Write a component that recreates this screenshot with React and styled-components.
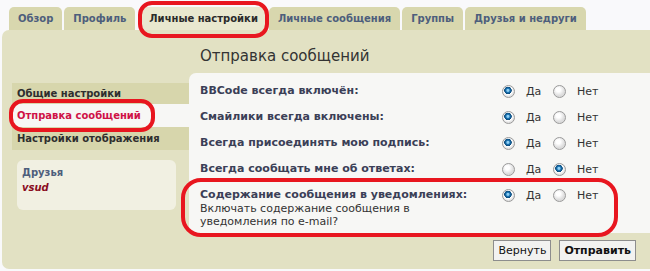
import React from 'react';
import styled, { createGlobalStyle } from 'styled-components';

const GlobalStyle = createGlobalStyle`
  html, body {
    margin: 0;
    padding: 0;
    background: #f9f9fb;
    overflow: hidden;
  }
  body {
    font-family: "DejaVu Sans", Verdana, sans-serif;
    font-size: 11px;
    color: #333;
  }
`;

const Page = styled.div`
  position: relative;
  width: 650px;
  height: 271px;
  padding: 7px 0 0 2px;
  box-sizing: border-box;
`;

const Tabs = styled.div`
  display: flex;
  gap: 2px;
  margin-left: 7px;
  height: 23px;
`;

const Tab = styled.div`
  padding: 0 9px;
  line-height: 24px;
  font-weight: bold;
  font-size: 10px;
  white-space: nowrap;
  border-radius: 5px 5px 0 0;
  background: ${(p) => (p.$active ? '#e9e8cf' : '#d8d7ae')};
  color: ${(p) => (p.$active ? '#2b2b2b' : '#4d5e7c')};
  margin-left: ${(p) => (p.$active ? '3px' : '0')};
`;

const Panel = styled.div`
  display: grid;
  grid-template-columns: 187px 1fr;
  height: 239px;
  background: #e2e1c3;
  border-radius: 7px 0 0 7px;
`;

const Side = styled.div`
  padding-top: 53px;
`;

const Menu = styled.ul`
  list-style: none;
  margin: 0 0 0 10px;
  padding: 0;
  background: #d7d6ac;
`;

const MenuItem = styled.li`
  height: ${(p) => (p.$first ? '21px' : '23px')};
  line-height: ${(p) => (p.$first ? '21px' : '23px')};
  padding-left: 5px;
  font-size: 10px;
  font-weight: bold;
  white-space: nowrap;
  color: ${(p) => (p.$active ? '#cf1247' : '#2e2e2e')};
  background: ${(p) => (p.$active ? '#f7f7f5' : 'transparent')};
`;

const Friends = styled.div`
  margin: 10px 13px 0 15px;
  height: 50px;
  box-sizing: border-box;
  padding: 5px 5px;
  border-radius: 6px;
  background: #f1f0e2;
  line-height: 15px;
  font-size: 10px;
`;

const FriendsTitle = styled.div`
  font-weight: bold;
  color: #4d5e7c;
`;

const FriendName = styled.div`
  font-weight: bold;
  font-style: italic;
  color: #8a0c1e;
`;

const Main = styled.div`
  display: flex;
  flex-direction: column;
`;

const Heading = styled.h2`
  margin: 0;
  height: 43px;
  padding-left: 11px;
  line-height: 52px;
  font-size: 15px;
  font-weight: normal;
  color: #333;
  white-space: nowrap;
`;

const Box = styled.div`
  height: 160px;
  box-sizing: border-box;
  padding-top: 5px;
  background: #f7f7f5;
  border-radius: 7px 0 0 0;
`;

const Row = styled.div`
  display: flex;
  align-items: flex-start;
  padding-left: 11px;
  min-height: 26px;
`;

const LabelCol = styled.div`
  flex: 1;
`;

const Label = styled.div`
  line-height: 26px;
  font-weight: bold;
  color: #3b3f57;
  white-space: nowrap;
`;

const Desc = styled.div`
  max-width: 250px;
  margin-top: -6px;
  line-height: 13px;
  color: #333;
`;

const Options = styled.div`
  display: flex;
  width: 148px;
  height: 26px;
  align-items: center;
`;

const Option = styled.label`
  display: flex;
  align-items: center;
  width: 51px;
  color: #333;
`;

const Radio = styled.span`
  width: 11px;
  height: 11px;
  border-radius: 50%;
  border: 1px solid #9a9a9a;
  margin-right: 11px;
  box-sizing: content-box;
  background: ${(p) =>
    p.$checked
      ? 'radial-gradient(circle at 45% 40%, #8fd0f5 0 1px, #1b74b3 2px, #0b4a7a 3.5px, #ffffff 4px, #e3e3e3 6px)'
      : 'radial-gradient(circle at 40% 35%, #ffffff 0 2px, #dcdcdc 6px)'};
`;

const Buttons = styled.div`
  display: flex;
  justify-content: flex-end;
  gap: 8px;
  padding: 7px 14px 0 0;
`;

const Button = styled.button`
  height: 21px;
  padding: 0 4px;
  border: 1px solid #8d8d8d;
  background: #f2f2f0;
  font-family: "DejaVu Sans", Verdana, sans-serif;
  font-size: 11px;
  font-weight: ${(p) => (p.$primary ? 'bold' : 'normal')};
  color: #111;
  cursor: pointer;
`;

const Mark = styled.div`
  position: absolute;
  border: 4px solid #e8161f;
  pointer-events: none;
`;

const rows = [
  { label: 'BBCode всегда включён:', yes: true },
  { label: 'Смайлики всегда включены:', yes: true },
  { label: 'Всегда присоединять мою подпись:', yes: true },
  { label: 'Всегда сообщать мне об ответах:', yes: false },
  {
    label: 'Содержание сообщения в уведомлениях:',
    desc: 'Включать содержание сообщения в уведомления по e-mail?',
    yes: true,
  },
];

export default function App() {
  return (
    <Page>
      <GlobalStyle />
      <Tabs>
        <Tab>Обзор</Tab>
        <Tab>Профиль</Tab>
        <Tab $active>Личные настройки</Tab>
        <Tab>Личные сообщения</Tab>
        <Tab>Группы</Tab>
        <Tab>Друзья и недруги</Tab>
      </Tabs>
      <Panel>
        <Side>
          <Menu>
            <MenuItem $first>Общие настройки</MenuItem>
            <MenuItem $active>Отправка сообщений</MenuItem>
            <MenuItem>Настройки отображения</MenuItem>
          </Menu>
          <Friends>
            <FriendsTitle>Друзья</FriendsTitle>
            <FriendName>vsud</FriendName>
          </Friends>
        </Side>
        <Main>
          <Heading>Отправка сообщений</Heading>
          <Box>
            {rows.map((r) => (
              <Row key={r.label}>
                <LabelCol>
                  <Label>{r.label}</Label>
                  {r.desc && <Desc>{r.desc}</Desc>}
                </LabelCol>
                <Options>
                  <Option>
                    <Radio $checked={r.yes} />
                    Да
                  </Option>
                  <Option>
                    <Radio $checked={!r.yes} />
                    Нет
                  </Option>
                </Options>
              </Row>
            ))}
          </Box>
          <Buttons>
            <Button>Вернуть</Button>
            <Button $primary>Отправить</Button>
          </Buttons>
        </Main>
      </Panel>

      <Mark style={{ left: 138, top: 1, width: 123, height: 29, borderRadius: 14 }} />
      <Mark style={{ left: 9, top: 99, width: 138, height: 25, borderRadius: 14 }} />
      <Mark style={{ left: 181, top: 178, width: 429, height: 51, borderRadius: 20 }} />
    </Page>
  );
}
